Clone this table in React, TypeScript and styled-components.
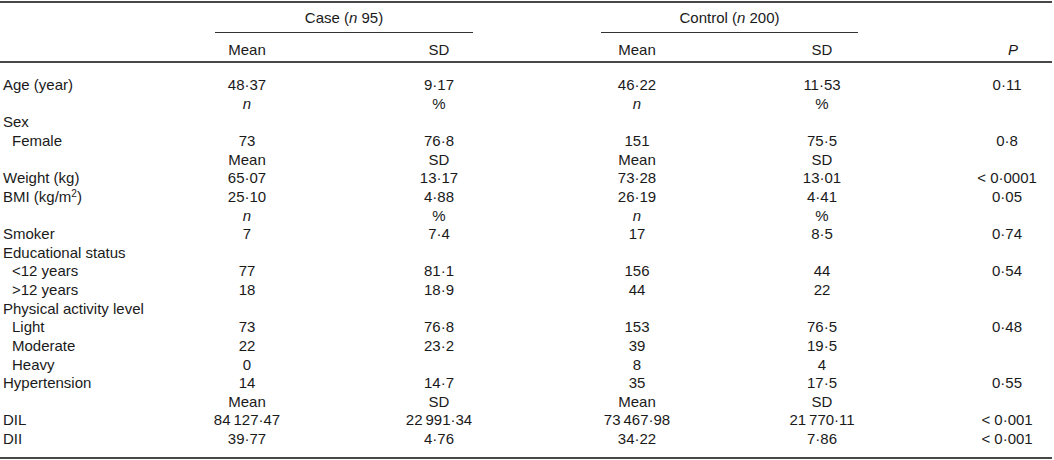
import * as React from "react";
import styled, { createGlobalStyle } from "styled-components";

const GlobalStyle = createGlobalStyle`
  body {
    margin: 0;
    background: #fff;
  }
`;

const RULE = "#474747";

const Table = styled.table`
  width: 1052px;
  margin-top: 1px;
  border-collapse: separate;
  border-spacing: 0;
  table-layout: fixed;
  font-family: "Liberation Sans", Arial, Helvetica, sans-serif;
  font-size: 15px;
  line-height: 18.63px;
  color: #1a1a1a;
  border-top: 2px solid ${RULE};
  border-bottom: 2px solid ${RULE};

  thead tr:last-child th {
    border-bottom: 2px solid ${RULE};
  }

  tbody tr:first-child td {
    padding-top: 13px;
  }

  tbody tr:last-child td {
    padding-bottom: 8px;
  }
`;

const Col = styled.col<{ $w: number }>`
  width: ${(p) => p.$w}px;
`;

const GroupHead = styled.th`
  padding: 5.8px 0 0 0;
  font-weight: normal;
  text-align: center;
`;

const GroupLabel = styled.div<{ $left: number; $right: number }>`
  margin: 0 ${(p) => p.$right}px 0 ${(p) => p.$left}px;
  padding-bottom: 4.6px;
  border-bottom: 1px solid #333;
`;

const ColHead = styled.th<{ $shift?: number }>`
  padding: 7.5px 0 2px ${(p) => p.$shift || 0}px;
  font-weight: normal;
  text-align: center;
`;

const Label = styled.td<{ $indent?: boolean }>`
  padding: 0 0 0 ${(p) => (p.$indent ? 12 : 3)}px;
  text-align: left;
  white-space: nowrap;
`;

const Value = styled.td<{ $shift?: number }>`
  padding: 0 0 0 ${(p) => p.$shift || 0}px;
  text-align: center;
  white-space: nowrap;
`;

const Em = styled.i`
  font-style: italic;
`;

const Sup = styled.sup`
  font-size: 10px;
  line-height: 0;
  vertical-align: 5px;
`;

type Row = {
  label?: React.ReactNode;
  indent?: boolean;
  cells: React.ReactNode[];
};

const nPct = ["n", "%", "n", "%", ""].map((c) =>
  c === "n" ? <Em>n</Em> : c
);
const meanSd = ["Mean", "SD", "Mean", "SD", ""];

const rows: Row[] = [
  { label: "Age (year)", cells: ["48·37", "9·17", "46·22", "11·53", "0·11"] },
  { cells: nPct },
  { label: "Sex", cells: ["", "", "", "", ""] },
  { label: "Female", indent: true, cells: ["73", "76·8", "151", "75·5", "0·8"] },
  { cells: meanSd },
  { label: "Weight (kg)", cells: ["65·07", "13·17", "73·28", "13·01", "< 0·0001"] },
  {
    label: (
      <>
        BMI (kg/m<Sup>2</Sup>)
      </>
    ),
    cells: ["25·10", "4·88", "26·19", "4·41", "0·05"],
  },
  { cells: nPct },
  { label: "Smoker", cells: ["7", "7·4", "17", "8·5", "0·74"] },
  { label: "Educational status", cells: ["", "", "", "", ""] },
  { label: "<12 years", indent: true, cells: ["77", "81·1", "156", "44", "0·54"] },
  { label: ">12 years", indent: true, cells: ["18", "18·9", "44", "22", ""] },
  { label: "Physical activity level", cells: ["", "", "", "", ""] },
  { label: "Light", indent: true, cells: ["73", "76·8", "153", "76·5", "0·48"] },
  { label: "Moderate", indent: true, cells: ["22", "23·2", "39", "19·5", ""] },
  { label: "Heavy", indent: true, cells: ["0", "", "8", "4", ""] },
  { label: "Hypertension", cells: ["14", "14·7", "35", "17·5", "0·55"] },
  { cells: meanSd },
  {
    label: "DIL",
    cells: ["84\u2009127·47", "22\u2009991·34", "73\u2009467·98", "21\u2009770·11", "< 0·001"],
  },
  { label: "DII", cells: ["39·77", "4·76", "34·22", "7·86", "< 0·001"] },
];

const App: React.FC = (): React.ReactElement => {
  return (
    <>
      <GlobalStyle />
      <Table>
        <colgroup>
          <Col $w={200} />
          <Col $w={94} />
          <Col $w={290} />
          <Col $w={106} />
          <Col $w={264} />
          <Col $w={98} />
        </colgroup>
        <thead>
          <tr>
            <GroupHead />
            <GroupHead colSpan={2}>
              <GroupLabel $left={15} $right={111}>
                Case (<Em>n</Em> 95)
              </GroupLabel>
            </GroupHead>
            <GroupHead colSpan={2}>
              <GroupLabel $left={17} $right={96}>
                Control (<Em>n</Em> 200)
              </GroupLabel>
            </GroupHead>
            <GroupHead />
          </tr>
          <tr>
            <ColHead />
            <ColHead>Mean</ColHead>
            <ColHead>SD</ColHead>
            <ColHead>Mean</ColHead>
            <ColHead>SD</ColHead>
            <ColHead $shift={20}>
              <Em>P</Em>
            </ColHead>
          </tr>
        </thead>
        <tbody>
          {rows.map((row, i) => (
            <tr key={i}>
              <Label $indent={row.indent}>{row.label}</Label>
              {row.cells.map((cell, j) => (
                <Value key={j} $shift={j === 4 ? 8 : 0}>
                  {cell}
                </Value>
              ))}
            </tr>
          ))}
        </tbody>
      </Table>
    </>
  );
};

export default App;
